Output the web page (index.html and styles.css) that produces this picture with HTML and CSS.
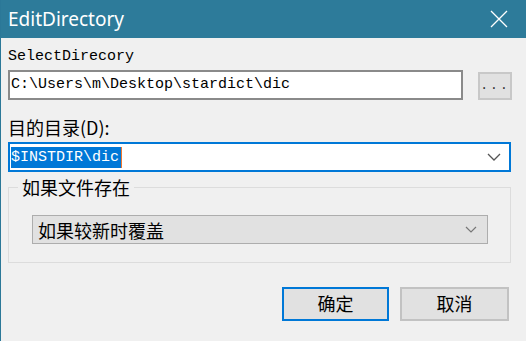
FILE: index.html
```html
<!DOCTYPE html>
<html lang="zh-CN">
<head>
    <meta charset="UTF-8">
    <title>EditDirectory</title>
    <link rel="stylesheet" href="styles.css">
</head>
<body>
    <div class="window">
        <div class="titlebar">
            <span class="title">EditDirectory</span>
            <svg class="close" width="18" height="18" viewBox="0 0 18 18">
                <path d="M1 1 L17 17 M17 1 L1 17" stroke="#fff" stroke-width="1.3" fill="none"/>
            </svg>
        </div>
        <div class="content">
            <div class="label mono">SelectDirecory</div>
            <div class="path-row">
                <div class="textbox mono">C:\Users\m\Desktop\stardict\dic</div>
                <div class="browse mono">...</div>
            </div>

            <div class="label cjk label-dest">目的目录(D):</div>
            <div class="combo">
                <span class="selected mono">$INSTDIR\dic</span><span class="caret"></span>
                <svg class="chevron" width="14" height="8" viewBox="0 0 14 8">
                    <path d="M1 1 L7 7 L13 1" stroke="#555" stroke-width="1.3" fill="none"/>
                </svg>
            </div>

            <fieldset class="group">
                <legend class="cjk">如果文件存在</legend>
                <div class="dropdown cjk">
                    <span>如果较新时覆盖</span>
                    <svg class="chevron" width="12" height="7" viewBox="0 0 12 7">
                        <path d="M1 1 L6 6 L11 1" stroke="#777" stroke-width="1.2" fill="none"/>
                    </svg>
                </div>
            </fieldset>

            <div class="buttons">
                <div class="btn btn-default cjk">确定</div>
                <div class="btn cjk">取消</div>
            </div>
        </div>
    </div>
</body>
</html>
```

FILE: styles.css
```css
body {
    margin: 0;
    background: #f0f0f0;
}
.window {
    width: 525px;
    height: 341px;
    border-left: 1px solid #2b7898;
    background: #f0f0f0;
    overflow: hidden;
}
.mono {
    font-family: "Liberation Mono", "DejaVu Sans Mono", monospace;
    font-size: 15px;
    color: #000;
}
.cjk {
    font-family: "Noto Sans CJK SC", sans-serif;
    font-size: 18px;
    color: #000;
}
.titlebar {
    height: 38px;
    background: #2d7b9a;
    display: flex;
    align-items: center;
    justify-content: space-between;
    padding: 0 18px 0 7px;
}
.title {
    font-family: "Noto Sans", "Open Sans", sans-serif;
    font-size: 19px;
    color: #fff;
    margin-top: -1px;
}
.close {
    margin-top: -1px;
}
.content {
    padding: 0 14px 0 7px;
}
.label {
    height: 32px;
    line-height: 20px;
    padding-top: 8px;
    box-sizing: border-box;
}
.label.mono {
    padding-top: 9px;
}
.path-row {
    display: flex;
    align-items: flex-start;
}
.textbox {
    width: 455px;
    height: 30px;
    box-sizing: border-box;
    border: 2px solid #8a8a8a;
    background: #fff;
    line-height: 26px;
    padding-left: 1px;
}
.browse {
    width: 34px;
    height: 28px;
    margin: 2px 0 0 15px;
    box-sizing: border-box;
    border: 2px solid #c8c8c8;
    background: #e1e1e1;
    line-height: 24px;
    text-align: center;
    font-size: 13px;
    letter-spacing: 2px;
    color: #333;
}
.label-dest {
    height: 42px;
    padding-top: 17px;
    line-height: 20px;
}
.combo {
    width: 503px;
    height: 30px;
    box-sizing: border-box;
    border: 2px solid #0078d7;
    background: #fff;
    display: flex;
    align-items: center;
    padding: 0 8px 0 1px;
}
.selected {
    background: #0078d7;
    color: #fff;
    line-height: 21px;
    padding-right: 2px;
}
.caret {
    width: 1px;
    height: 21px;
    background: #f07830;
}
.combo .chevron {
    margin-left: auto;
}
.group {
    width: 503px;
    height: 88px;
    box-sizing: border-box;
    margin: 3px 0 0 0;
    padding: 16px 22px 0 23px;
    border: 1px solid #dcdcdc;
    border-radius: 0;
}
.group legend {
    padding: 0 4px;
    margin-left: -14px;
    line-height: 24px;
}
.dropdown {
    height: 29px;
    box-sizing: border-box;
    border: 1px solid #adadad;
    background: #e1e1e1;
    display: flex;
    align-items: center;
    justify-content: space-between;
    padding: 0 10px 0 5px;
}
.buttons {
    display: flex;
    justify-content: flex-end;
    gap: 11px;
    margin-top: 24px;
    padding-right: 3px;
}
.btn {
    width: 109px;
    height: 34px;
    box-sizing: border-box;
    border: 2px solid #c2c2c2;
    background: #e1e1e1;
    text-align: center;
    line-height: 28px;
}
.btn-default {
    width: 107px;
    border-color: #0078d7;
}
```
